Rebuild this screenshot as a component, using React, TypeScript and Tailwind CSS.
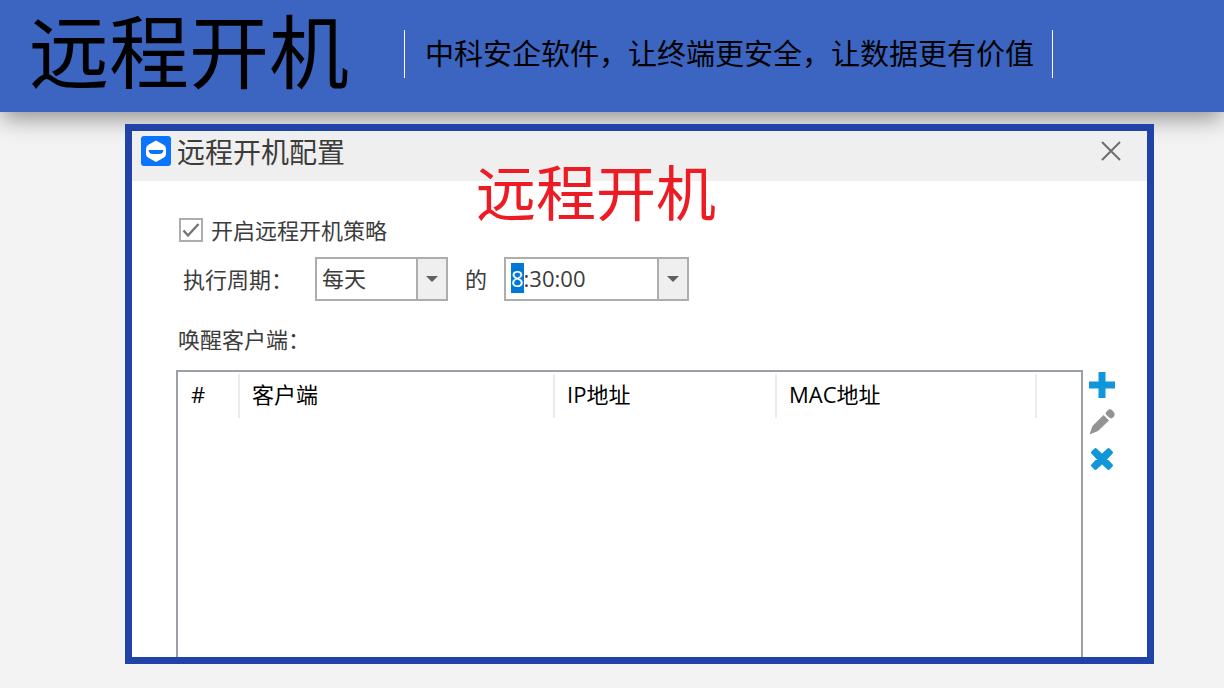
import { useEffect, useRef, useState } from "react";
import { clsx } from "clsx";

const columns = [
  { label: "#", width: "w-[61px]" },
  { label: "客户端", width: "w-[315px]" },
  { label: "IP地址", width: "w-[222px]" },
  { label: "MAC地址", width: "w-[260px]" },
];

const Banner = () => (
  <header className="relative flex h-28 items-center bg-[#3b65c0] pl-7 text-black shadow-[0_8px_22px_-2px_rgba(0,0,0,0.42)]">
    <h1 className="w-[376px] self-start pl-px text-[80px] leading-[102px] whitespace-nowrap">远程开机</h1>
    <p className="mb-1 border-x border-white pr-[18px] pl-5 text-[29px] leading-[48px] whitespace-nowrap">
      中科安企软件，让终端更安全，让数据更有价值
    </p>
  </header>
);

const AppLogo = () => (
  <svg className="h-[30px] w-[30px]" viewBox="0 0 30 30" aria-hidden="true">
    <rect width="30" height="30" rx="3" fill="#0a74ff" />
    <path
      d="M15 4.500 L23 9 Q25 10.500 25 13 V18 Q25 20.500 23 21.500 L15 26 L7 21.500 Q5 20.500 5 18 V13 Q5 10.500 7 9 Z"
      fill="#fff"
    />
    <path d="M7.500 14 H22.500 Q22 18 18.500 18 H11.500 Q8 18 7.500 14 Z" fill="#0a74ff" />
  </svg>
);

// grey drop-down part on the right of a field
const Arrow = () => (
  <svg className="h-[6px] w-3" viewBox="0 0 12 6" aria-hidden="true">
    <path d="M0 0 H12 L6 6 Z" fill="#606060" />
  </svg>
);

const TimeField = () => {
  const ref = useRef<HTMLInputElement>(null);
  const [time, setTime] = useState<string>("8:30:00");

  // the hour is selected when the dialog opens
  useEffect(() => {
    ref.current?.focus();
    ref.current?.setSelectionRange(0, 1);
  }, []);

  return (
    <div className="flex h-11 w-[185px] border-2 border-[#adadad] bg-white">
      <input
        ref={ref}
        type="text"
        aria-label="执行时间"
        value={time}
        onChange={(e) => setTime(e.target.value)}
        className="min-w-0 flex-1 pl-[5px] pb-[2px] outline-none selection:bg-[#0078d7] selection:text-white"
      />
      <button
        type="button"
        aria-label="选择时间"
        className="flex w-[30px] items-center justify-center border-l-2 border-[#adadad] bg-[#efefef]"
      >
        <Arrow />
      </button>
    </div>
  );
};

const ClientTable = () => (
  <div className="flex-1 border-2 border-b-0 border-[#9a9fa8] pt-[2px]">
    <table className="w-full table-fixed border-collapse text-left text-black">
      <thead>
        <tr className="h-11">
          {columns.map((col, i) => (
            <th
              key={col.label}
              className={clsx(
                "border-r-2 border-[#ebebeb] pb-1 font-normal",
                i === 0 ? "pl-[13px]" : "pl-3",
                col.width
              )}
            >
              {col.label}
            </th>
          ))}
          <td></td>
        </tr>
      </thead>
      <tbody></tbody>
    </table>
  </div>
);

const Actions = () => (
  <div className="flex w-16 flex-col gap-[11px] pt-[2px] pl-[6px]">
    <button type="button" aria-label="添加" className="h-[26px] w-[26px]">
      <svg viewBox="0 0 26 26">
        <path d="M9.500 0 H16.500 V9.500 H26 V16.500 H16.500 V26 H9.500 V16.500 H0 V9.500 H9.500 Z" fill="#1296db" />
      </svg>
    </button>
    <button type="button" aria-label="编辑" className="h-[26px] w-[26px]">
      <svg viewBox="0 0 26 26" fill="#939393">
        <path d="M14.500 6 L20 11.500 L9 22 L0.500 25.500 L3.500 17 Z" />
        <path d="M16.500 4 L18.500 1.500 Q20.500 -0.500 23 1 L25 3.500 Q26.500 6 24.500 8 L22.500 9.500 Q21 9.500 19 7.500 Q16.500 5.500 16.500 4 Z" />
      </svg>
    </button>
    <button type="button" aria-label="删除" className="h-[26px] w-[26px]">
      <svg viewBox="0 0 26 26">
        <path
          d="M6.500 3.500 L13 9.500 L19.500 3.500 L22.500 6.500 L16.500 13 L22.500 19.500 L19.500 22.500 L13 16.500 L6.500 22.500 L3.500 19.500 L9.500 13 L3.500 6.500 Z"
          fill="#1296db"
          stroke="#1296db"
          strokeWidth="3"
          strokeLinejoin="round"
        />
      </svg>
    </button>
  </div>
);

const Dialog = () => {
  const [enabled, setEnabled] = useState<boolean>(true);

  return (
    <section
      aria-labelledby="dialog-title"
      className="relative mt-3 mr-[70px] mb-6 ml-[125px] flex flex-1 flex-col border-[7px] border-[#2143a7] bg-white text-[22px] leading-[30px] text-[#3c3c3c]"
    >
      <div className="flex h-[50px] bg-[#efefef] pt-[5px] pr-6 pl-[9px]">
        <AppLogo />
        <h2 id="dialog-title" className="ml-[6px] text-[28px] leading-[32px]">远程开机配置</h2>
        <button type="button" aria-label="关闭" className="ml-auto flex h-[30px] w-6 items-center justify-center">
          <svg className="h-5 w-5" viewBox="0 0 20 20" aria-hidden="true">
            <path d="M1 1 L19 19 M19 1 L1 19" stroke="#6e6e6e" strokeWidth="2" />
          </svg>
        </button>
      </div>

      {/* red caption laid over the title bar and the form */}
      <p className="pointer-events-none absolute top-7 left-[344px] text-[60px] leading-[68px] whitespace-nowrap text-[#ed1c24]">
        远程开机
      </p>

      <div className="flex flex-1 flex-col pt-[31px] pl-11">
        <label className="ml-[3px] flex h-9 items-center self-start">
          <span className="relative mr-2 flex">
            <input
              type="checkbox"
              checked={enabled}
              onChange={(e) => setEnabled(e.target.checked)}
              className="h-6 w-6 appearance-none border-2 border-[#adadad] bg-white"
            />
            {enabled && (
              <svg className="pointer-events-none absolute inset-0" viewBox="0 0 24 24" aria-hidden="true">
                <path d="M4.500 12.500 L9 17.500 L19.500 6" fill="none" stroke="#777" strokeWidth="2.500" />
              </svg>
            )}
          </span>
          开启远程开机策略
        </label>

        <div className="mt-[9px] flex h-11 items-center">
          <label htmlFor="cycle" className="w-[139px] pl-[7px]">执行周期：</label>
          <div className="relative">
            <select
              id="cycle"
              defaultValue="每天"
              className="block h-11 w-[133px] appearance-none border-2 border-[#adadad] bg-white pr-8 pb-[2px] pl-[5px] outline-none"
            >
              <option>每天</option>
              <option>每周</option>
              <option>每月</option>
            </select>
            <span className="pointer-events-none absolute inset-y-[2px] right-[2px] flex w-[30px] items-center justify-center border-l-2 border-[#adadad] bg-[#efefef]">
              <Arrow />
            </span>
          </div>
          <span className="w-14 text-center">的</span>
          <TimeField />
        </div>

        <h3 className="mt-[18px] flex h-10 items-center pl-[2px]">唤醒客户端：</h3>

        <div className="mt-[11px] flex flex-1">
          <ClientTable />
          <Actions />
        </div>
      </div>
    </section>
  );
};

const App = () => (
  <div className="flex min-h-screen flex-col bg-[#f3f3f3] font-['Open_Sans','Noto_Sans_CJK_SC',sans-serif]">
    <Banner />
    <Dialog />
  </div>
);

export default App;
